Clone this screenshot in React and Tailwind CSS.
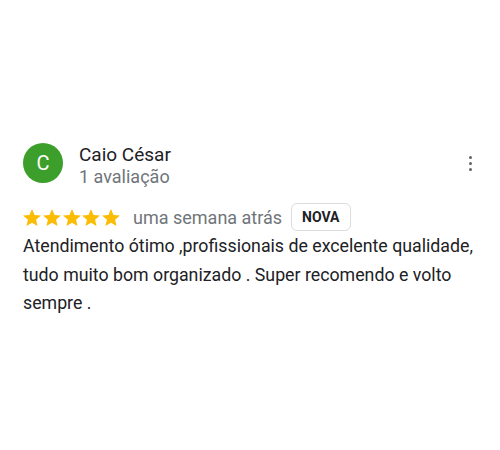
export default function App() {
  return (
    <div className="w-[500px] h-[450px] bg-white font-['Roboto',sans-serif] text-[#202124]">
      <div className="px-[23px] pt-[143px] relative">
        <div className="flex items-start gap-4">
          <div className="w-10 h-10 shrink-0 rounded-full bg-[#3d9f2b] flex items-center justify-center text-white text-[20px]">
            C
          </div>
          <div className="flex flex-col mt-[1px]">
            <div className="text-[19px] leading-[22px] text-[#202124]">Caio César</div>
            <div className="text-[18px] leading-[22px] text-[#70757a]">1 avaliação</div>
          </div>
        </div>
        <div className="absolute right-[28px] top-[156px] flex flex-col gap-[3px]">
          <span className="w-[3px] h-[3px] rounded-full bg-[#5f6368]" />
          <span className="w-[3px] h-[3px] rounded-full bg-[#5f6368]" />
          <span className="w-[3px] h-[3px] rounded-full bg-[#5f6368]" />
        </div>

        <div className="flex items-center h-7 mt-[15px]">
          <div className="flex gap-[1.75px]">
            {[0, 1, 2, 3, 4].map((i) => (
              <svg key={i} width="18" height="17" viewBox="2 2 20 19">
                <path
                  fill="#fbbc04"
                  d="M12 17.27 18.18 21l-1.64-7.03L22 9.24l-7.19-.61L12 2 9.19 8.63 2 9.24l5.46 4.73L5.82 21z"
                />
              </svg>
            ))}
          </div>
          <span className="ml-[13px] text-[18px] text-[#70757a]">uma semana atrás</span>
          <span className="ml-[9px] h-7 px-[10px] flex items-center border border-[#dadce0] rounded-md text-[14px] font-bold">
            NOVA
          </span>
        </div>

        <p className="mt-[1px] w-[462px] text-[17.75px] leading-[28.5px]">
          Atendimento ótimo ,profissionais de excelente qualidade, tudo muito bom organizado . Super recomendo e volto sempre .
        </p>
      </div>
    </div>
  );
}
